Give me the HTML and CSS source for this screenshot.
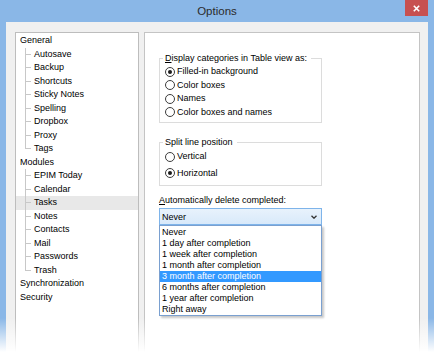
FILE: index.html
```html
<!DOCTYPE html>
<html lang="en">
<head>
<meta charset="utf-8">
<title>Options</title>
<link rel="stylesheet" href="styles.css">
</head>
<body>
<div class="window">
  <header class="titlebar">
    <span></span>
    <h1 class="title">Options</h1>
    <div class="close-wrap">
      <button class="close" aria-label="Close">
        <svg width="7" height="7" viewBox="0 0 7 7"><path d="M0.8 0.8 L6.2 6.2 M6.2 0.8 L0.8 6.2" stroke="#fff" stroke-width="1.6" fill="none"/></svg>
      </button>
    </div>
  </header>
  <div class="client">
    <nav class="tree">
      <div class="node">General</div>
      <div class="child">Autosave</div>
      <div class="child">Backup</div>
      <div class="child">Shortcuts</div>
      <div class="child">Sticky Notes</div>
      <div class="child">Spelling</div>
      <div class="child">Dropbox</div>
      <div class="child">Proxy</div>
      <div class="child last">Tags</div>
      <div class="node">Modules</div>
      <div class="child">EPIM Today</div>
      <div class="child">Calendar</div>
      <div class="child selected">Tasks</div>
      <div class="child">Notes</div>
      <div class="child">Contacts</div>
      <div class="child">Mail</div>
      <div class="child">Passwords</div>
      <div class="child last">Trash</div>
      <div class="node">Synchronization</div>
      <div class="node">Security</div>
    </nav>
    <section class="panel">
      <fieldset class="group g1">
        <legend><u>D</u>isplay categories in Table view as:</legend>
        <div class="option"><span class="radio checked"></span>Filled-in background</div>
        <div class="option"><span class="radio"></span>Color boxes</div>
        <div class="option"><span class="radio"></span>Names</div>
        <div class="option"><span class="radio"></span>Color boxes and names</div>
      </fieldset>
      <fieldset class="group g2">
        <legend>Split line position</legend>
        <div class="option"><span class="radio"></span>Vertical</div>
        <div class="option gap"><span class="radio checked"></span>Horizontal</div>
      </fieldset>
      <div class="label"><u>A</u>utomatically delete completed:</div>
      <div class="combo">
        <span>Never</span>
        <svg width="6" height="4" viewBox="0 0 6 4"><path d="M0.5 0.7 L3 3.2 L5.5 0.7" stroke="#333" stroke-width="1.3" fill="none"/></svg>
      </div>
      <ul class="list">
        <li>Never</li>
        <li>1 day after completion</li>
        <li>1 week after completion</li>
        <li>1 month after completion</li>
        <li class="hl">3 month after completion</li>
        <li>6 months after completion</li>
        <li>1 year after completion</li>
        <li>Right away</li>
      </ul>
    </section>
  </div>
  <div class="fade"></div>
</div>
</body>
</html>
```
FILE: styles.css
```css
html, body {
  margin: 0;
  padding: 0;
}
body {
  width: 434px;
  height: 352px;
  overflow: hidden;
  background: #8ab7e7;
  font-family: "Liberation Sans", Arial, sans-serif;
  font-size: 9px;
  color: #000;
}
.window {
  position: relative;
  height: 352px;
  display: flex;
  flex-direction: column;
  overflow: hidden;
}
.titlebar {
  height: 22px;
  flex: none;
  display: grid;
  grid-template-columns: 1fr auto 1fr;
  align-items: start;
}
.title {
  margin: 0;
  font-weight: normal;
  font-size: 11.5px;
  line-height: 23px;
  color: #2b2b2b;
}
.close-wrap {
  justify-self: end;
  padding-right: 6px;
}
.close {
  width: 23px;
  height: 16px;
  background: #c75050;
  border: 0;
  padding: 0;
  display: flex;
  align-items: center;
  justify-content: center;
}
.client {
  flex: 1;
  min-height: 0;
  margin: 0 6px;
  background: #f0f0f0;
  display: flex;
  gap: 5px;
  padding: 10px 8px 0 9px;
}
.tree {
  flex: none;
  width: 124px;
  min-height: 340px;
  box-sizing: border-box;
  border: 1px solid #bdbdbd;
  background: #fff;
  padding-top: 1px;
}
.node, .child {
  height: 13.5px;
  line-height: 13.5px;
  white-space: nowrap;
}
.node {
  padding-left: 4px;
}
.child {
  padding-left: 18px;
  background:
    linear-gradient(#c8c8c8, #c8c8c8) 9px 0 / 1px 100% no-repeat,
    linear-gradient(#c8c8c8, #c8c8c8) 9px 50% / 6px 1px no-repeat;
}
.child.last {
  background-size: 1px 50%, 6px 1px;
}
.child.selected {
  background-color: #e8e8e8;
}
.panel {
  flex: none;
  width: 276px;
  min-height: 340px;
  box-sizing: border-box;
  border: 1px solid #c4c4c4;
  background: #fff;
  padding: 19px 0 0 14px;
}
.group {
  width: 163px;
  box-sizing: border-box;
  margin: 0;
  border: 1px solid #dcdcdc;
  padding: 0 0 3px 5px;
}
.group legend {
  padding: 0 4px 0 2px;
  margin-left: -2px;
  line-height: 13px;
}
.g2 {
  margin-top: 13px;
  padding-top: 1px;
  padding-bottom: 5px;
}
.option {
  display: flex;
  align-items: center;
  gap: 2px;
  height: 13.5px;
  line-height: 13.5px;
  white-space: nowrap;
}
.option.gap {
  margin-top: 3px;
}
.radio {
  flex: none;
  width: 10px;
  height: 10px;
  box-sizing: border-box;
  border: 1px solid #3c3c3c;
  border-radius: 50%;
  background: #fff;
  display: flex;
  align-items: center;
  justify-content: center;
}
.radio.checked::after {
  content: "";
  width: 4px;
  height: 4px;
  border-radius: 50%;
  background: #1b1b1b;
}
.label {
  margin-top: 7px;
  line-height: 14px;
  white-space: nowrap;
}
.combo {
  margin-top: 1px;
  width: 163px;
  height: 17px;
  box-sizing: border-box;
  border: 1px solid #7eb4ea;
  background: linear-gradient(#e8f2fc, #d8e9fa);
  display: flex;
  align-items: center;
  justify-content: space-between;
  padding: 0 4px 0 2px;
}
.list {
  list-style: none;
  margin: 0;
  padding: 1px 0 0;
  width: 163px;
  box-sizing: border-box;
  border: 1px solid #7aa0d0;
  background: #fff;
  box-shadow: 2px 2px 2px rgba(0, 0, 0, 0.22);
}
.list li {
  height: 11px;
  line-height: 11px;
  padding-left: 2px;
  white-space: nowrap;
}
.list .hl {
  background: #3399ff;
  color: #fff;
}
.fade {
  position: absolute;
  left: 0;
  right: 0;
  bottom: 0;
  height: 34px;
  background: linear-gradient(rgba(255, 255, 255, 0), #fff);
  pointer-events: none;
}
```
